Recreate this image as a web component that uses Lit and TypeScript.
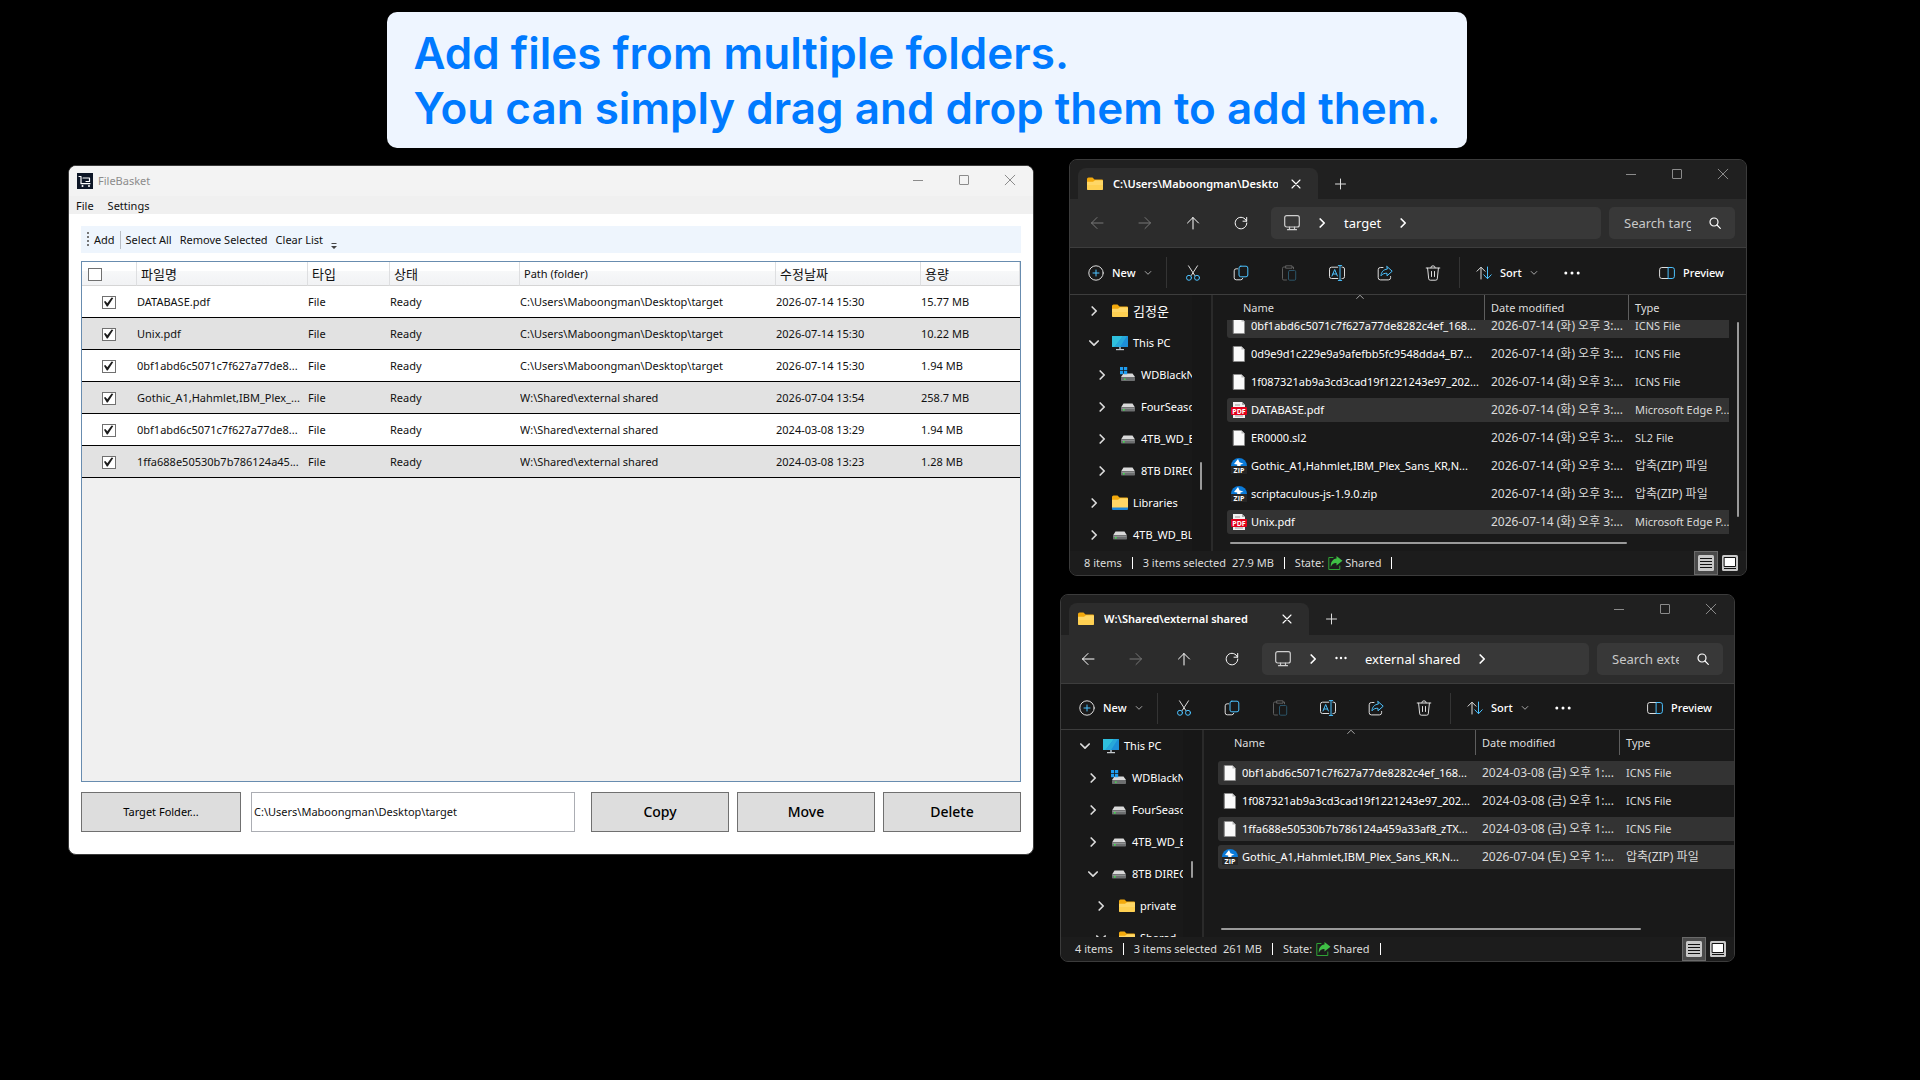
import { LitElement, html, css, svg, nothing, TemplateResult } from "lit";
import { customElement, property } from "lit/decorators.js";
import { classMap } from "lit/directives/class-map.js";

/* ---------- icons ---------- */

const draw = (size: number, body: unknown, cls = "") => html`
  <svg class="icon ${cls}" width=${size} height=${size} viewBox="0 0 ${size} ${size}"
    fill="none" stroke-linecap="round" stroke-linejoin="round" aria-hidden="true">${body}</svg>`;

const ACCENT = "#4cc2ff";
const LIGHT = "#dedede";

const icons: Record<string, () => TemplateResult> = {
  cart: () => draw(16, svg`
    <rect width="16" height="16" fill="#0d1626"/>
    <path d="M2 3.500h2v7.200h8.500M6 5h6.500v3.500H9M4 10.700h9" stroke="#fff" stroke-width="1.200"/>
    <circle cx="5.500" cy="13" r="1" fill="#fff"/><circle cx="12" cy="13" r="1" fill="#fff"/>`),
  minimize: () => draw(12, svg`<path d="M1 6.500h10" stroke="currentColor" stroke-linecap="butt"/>`),
  maximize: () => draw(12, svg`<rect x="1.500" y="1.500" width="9" height="9" rx="0.500" stroke="currentColor"/>`),
  close: () => draw(12, svg`<path d="M1.200 1.200l9.600 9.600M10.800 1.200l-9.600 9.600" stroke="currentColor"/>`),
  tabClose: () => draw(10, svg`<path d="M1 1l8 8M9 1L1 9" stroke="currentColor" stroke-width="1.100"/>`),
  plus: () => draw(12, svg`<path d="M6.500 1v10M1.500 6h10" stroke="currentColor"/>`),
  folder: () => draw(16, svg`
    <path d="M0 3a1.500 1.500 0 0 1 1.500-1.500h4L7.500 3.500H15a1 1 0 0 1 1 1V8H0z" fill="#f3a90c"/>
    <path d="M0 5.800h6l2-1.600h7.200a.8.8 0 0 1 .8.8v8a1 1 0 0 1-1 1H1a1 1 0 0 1-1-1z" fill="#ffd766"/>
    <path d="M0 9h16v4a1 1 0 0 1-1 1H1a1 1 0 0 1-1-1z" fill="#fdcb45" opacity=".6"/>`),
  library: () => draw(16, svg`
    <path d="M0 2a1.500 1.500 0 0 1 1.500-1.500h4L7.500 2.500H15a1 1 0 0 1 1 1V7H0z" fill="#f3a90c"/>
    <path d="M0 4.800h6l2-1.600h7.200a.8.8 0 0 1 .8.8v9H0z" fill="#ffd766"/>
    <path d="M0 12.500h16v1.500a1 1 0 0 1-1 1H1a1 1 0 0 1-1-1z" fill="#1c86d8"/>`),
  monitor: () => draw(16, svg`
    <path d="M0 1h16v11H0z" fill="#1d8fd8"/><path d="M0 1h11L2.500 12H0z" fill="#2fc0dd"/>
    <path d="M11 1L2.500 12H8L15 1z" fill="#27a8da"/>
    <path d="M7 12h2v2H7z" fill="#8d959c"/><path d="M4 14h8v1.200H4z" fill="#c3c8cc"/>`),
  drive: () => draw(16, svg`
    <path d="M3.500 4.500h9L15 8.500H1z" fill="#d9d9d9"/>
    <rect x="1" y="8.500" width="14" height="4" rx="0.800" fill="#6d6f70"/>
    <rect x="1.500" y="9" width="13" height="1" fill="#8f9192"/>
    <rect x="3" y="10" width="1.600" height="1.600" fill="#3fe04d"/>`),
  systemDrive: () => draw(16, svg`
    <path d="M3.500 6.500h9L15 10H1z" fill="#d9d9d9"/>
    <rect x="1" y="10" width="14" height="4" rx="0.800" fill="#6d6f70"/>
    <rect x="4" y="11.500" width="1.600" height="1.400" fill="#3fe04d"/>
    <path d="M0 0h3.200v3.200H0zM4 0h3.200v3.200H4zM0 4h3.200v3.200H0zM4 4h3.200v3.200H4z" fill="#1f9df0"/>`),
  file: () => draw(16, svg`
    <path d="M2.500.5h8l3 3v12h-11z" fill="#fafafa" stroke="#8d8d8d" stroke-width=".6"/>
    <path d="M10.500.5v3h3z" fill="#b8b8b8"/>`),
  pdf: () => html`<svg class="icon" width="16" height="16" viewBox="0 0 16 16" aria-hidden="true">
    <path d="M2 0h9l3 3v13H2z" fill="#f2f2f2"/><path d="M11 0v3h3z" fill="#a9a9a9"/>
    <path d="M4 3h5M4 14h8" stroke="#9a9a9a"/>
    <rect y="5" width="16" height="8" rx="1" fill="#e3001b"/>
    <text x="8" y="11.500" text-anchor="middle" font-family="Open Sans, sans-serif" font-weight="700" font-size="7" fill="#fff">PDF</text></svg>`,
  zip: () => html`<svg class="icon" width="16" height="16" viewBox="0 0 16 16" aria-hidden="true">
    <path d="M0 8a8 8 0 0 1 16 0z" fill="#0a7ad8"/>
    <path d="M7 1l1.500 3.200 4 1.600-3 .7V8H6.200V6.500L3 6z" fill="#fff"/>
    <rect y="8" width="16" height="8" fill="#262626"/>
    <text x="8" y="14.500" text-anchor="middle" font-family="Open Sans, sans-serif" font-weight="700" font-size="7" fill="#fff">ZIP</text></svg>`,
  back: () => draw(16, svg`<path d="M14 8H2.500M8 2.500L2.500 8 8 13.500" stroke="currentColor"/>`),
  forward: () => draw(16, svg`<path d="M2 8h11.500M8 2.500L13.500 8 8 13.500" stroke="currentColor"/>`),
  up: () => draw(16, svg`<path d="M8 14V2.500M2.500 8L8 2.500 13.500 8" stroke="currentColor"/>`),
  refresh: () => draw(16, svg`<path d="M13.500 6.200A5.800 5.800 0 1 0 13.800 8M13.700 2.500v3.700H10" stroke="currentColor"/>`),
  pc: () => draw(16, svg`
    <rect x="0.700" y="0.700" width="14.600" height="11.300" rx="2" stroke="#cfcfcf" stroke-width="1.200"/>
    <path d="M5.500 12v2.500M10.500 12v2.500M3.500 14.700h9" stroke="#cfcfcf" stroke-width="1.200"/>`),
  chevronRight: () => draw(10, svg`<path d="M3.200 1L7.200 5 3.200 9" stroke="currentColor" stroke-width="1.700"/>`),
  chevronDown: () => draw(10, svg`<path d="M.8 3L5 7.200 9.200 3" stroke="currentColor" stroke-width="1.700"/>`),
  caret: () => draw(8, svg`<path d="M1.200 2.500L4 5.300l2.800-2.800" stroke="#a8a8a8"/>`),
  sortMark: () => draw(8, svg`<path d="M.7 5.500L4 2.200l3.300 3.300" stroke="#a8a8a8"/>`),
  search: () => draw(12, svg`<circle cx="5" cy="5" r="4" stroke="currentColor" stroke-width="1.200"/><path d="M8 8l3.300 3.300" stroke="currentColor" stroke-width="1.200"/>`),
  add: () => draw(16, svg`<circle cx="8" cy="8" r="7.200" stroke=${LIGHT}/><path d="M8 5v6M5 8h6" stroke=${ACCENT}/>`),
  cut: () => draw(16, svg`
    <path d="M3.500.8l6.300 9.700M12.500.8L6.200 10.500" stroke=${LIGHT}/>
    <circle cx="4" cy="12.800" r="2.500" stroke=${ACCENT}/><circle cx="12" cy="12.800" r="2.500" stroke=${ACCENT}/>`),
  copy: () => draw(16, svg`
    <path d="M4.500 3.800H3.200A2 2 0 0 0 1.200 5.800v7a2 2 0 0 0 2 2h4.600a2 2 0 0 0 2-1.600" stroke=${LIGHT}/>
    <rect x="6" y="1.200" width="8.800" height="10.600" rx="1.800" stroke=${ACCENT}/>`),
  paste: () => draw(16, svg`
    <path d="M5 2H2.800A1.300 1.300 0 0 0 1.500 3.300v10.400a1.300 1.300 0 0 0 1.300 1.300H5.500M11 2h1.500v1.800M5 .8h6v2.400H5z" stroke="#5f5f5f"/>
    <rect x="7.500" y="5.500" width="7.200" height="9.700" rx="1.200" stroke="#2c5468"/>`),
  rename: () => draw(16, svg`
    <path d="M8.800 2.200H2.500A2 2 0 0 0 .5 4.200v7.300a2 2 0 0 0 2 2h6.300M13 2.200h.7a1.800 1.800 0 0 1 1.800 1.800v7.700a1.800 1.800 0 0 1-1.800 1.800H13" stroke=${LIGHT}/>
    <path d="M3 11l2.700-6.500L8.400 11M4 9h3.400M11 .7v14.600M9.300.6h3.400M9.300 15.400h3.400" stroke=${ACCENT}/>`),
  share: () => draw(16, svg`
    <path d="M6 2.500H3.400a2.200 2.200 0 0 0-2.200 2.200v8a2.200 2.200 0 0 0 2.200 2.200h8a2.200 2.200 0 0 0 2.200-2.200V11.500" stroke=${LIGHT}/>
    <path d="M10 1.500l5.200 4.700L10 10.800V8.300c-2.500-.2-4.500.5-6 2.500.2-3.500 2.200-6.300 6-6.700z" stroke=${ACCENT}/>`),
  trash: () => draw(16, svg`<path d="M1.200 3h13.600M5.800 2.800a2.200 2 0 0 1 4.400 0M2.600 3.200l1.100 10.600a1.600 1.600 0 0 0 1.600 1.400h5.400a1.600 1.600 0 0 0 1.600-1.400L13.400 3.200M6.500 6.500v5M9.500 6.500v5" stroke=${LIGHT}/>`),
  sort: () => draw(16, svg`<path d="M5 14V2.500M1 6.200l4-4 4 4" stroke=${LIGHT}/><path d="M11.500 2v11.500M7.800 9.800l3.700 3.900 3.700-3.900" stroke=${ACCENT}/>`),
  more: () => draw(16, svg`<circle cx="1.800" cy="8" r="1.500" fill="#fff"/><circle cx="8" cy="8" r="1.500" fill="#fff"/><circle cx="14.200" cy="8" r="1.500" fill="#fff"/>`),
  moreSmall: () => draw(12, svg`<circle cx="1.500" cy="5" r="1.200" fill="#fff"/><circle cx="6" cy="5" r="1.200" fill="#fff"/><circle cx="10.500" cy="5" r="1.200" fill="#fff"/>`),
  preview: () => draw(16, svg`
    <path d="M9.500 2.500H2.800a2.200 2.200 0 0 0-2.200 2.200v6.600a2.200 2.200 0 0 0 2.200 2.200h6.700" stroke=${LIGHT}/>
    <path d="M9.500 2.500h3.700a2.200 2.200 0 0 1 2.200 2.200v6.600a2.200 2.200 0 0 1-2.200 2.200H9.500z" stroke=${ACCENT}/>`),
  shared: () => draw(16, svg`
    <path d="M6 2.500H1.800v12h11V11" stroke="#2fa336"/>
    <path d="M9.500 1l6 4.800-6 4.800V8C6.500 7.800 5 9 3.800 12 3.500 7.500 5.500 4 9.500 3.600z" fill="#3fbf45"/>`),
  details: () => draw(16, svg`<rect width="16" height="16" rx="1.500" fill="#c8c8c8"/><path d="M2 3.500h12M2 6.500h12M2 9.500h12M2 12.500h12" stroke="#111" stroke-linecap="butt"/>`),
  tiles: () => draw(16, svg`<rect width="16" height="16" rx="1.500" fill="#c8c8c8"/><rect x="2.500" y="2.500" width="11" height="9" fill="#fff" stroke="#111"/><path d="M2 13.500h12" stroke="#111" stroke-linecap="butt"/>`),
};

const base = css`
  :host { display: block; box-sizing: border-box; font-family: "Noto Sans", "Noto Sans CJK KR", sans-serif; font-size: 11px; line-height: 16px; }
  *, *::before, *::after { box-sizing: border-box; }
  button, input { font: inherit; color: inherit; }
  button { background: none; border: 0; padding: 0; margin: 0; display: flex; align-items: center; justify-content: center; white-space: nowrap; }
  ul { list-style: none; margin: 0; padding: 0; }
  th, td { padding: 0; text-align: left; font-weight: 400; white-space: nowrap; overflow: hidden; }
  .icon { display: block; flex: none; }
  .controls { display: flex; margin-left: auto; align-self: flex-start; color: #8b8b8b; }
  .controls button { width: 46px; height: 28px; }
`;

const windowControls = () => html`
  <div class="controls">
    <button aria-label="Minimize">${icons.minimize()}</button>
    <button aria-label="Maximize">${icons.maximize()}</button>
    <button aria-label="Close">${icons.close()}</button>
  </div>`;

/* ---------- FileBasket window ---------- */

interface BasketRow { name: string; path: string; date: string; size: string; }

const DESKTOP = "C:\\Users\\Maboongman\\Desktop\\target";
const EXTERNAL = "W:\\Shared\\external shared";

@customElement("file-basket")
export class FileBasket extends LitElement {
  rows: BasketRow[] = [
    { name: "DATABASE.pdf", path: DESKTOP, date: "2026-07-14 15:30", size: "15.77 MB" },
    { name: "Unix.pdf", path: DESKTOP, date: "2026-07-14 15:30", size: "10.22 MB" },
    { name: "0bf1abd6c5071c7f627a77de8...", path: DESKTOP, date: "2026-07-14 15:30", size: "1.94 MB" },
    { name: "Gothic_A1,Hahmlet,IBM_Plex_...", path: EXTERNAL, date: "2026-07-04 13:54", size: "258.7 MB" },
    { name: "0bf1abd6c5071c7f627a77de8...", path: EXTERNAL, date: "2024-03-08 13:29", size: "1.94 MB" },
    { name: "1ffa688e50530b7b786124a45...", path: EXTERNAL, date: "2024-03-08 13:23", size: "1.28 MB" },
  ];

  static styles = [base, css`
    :host { background: #fff; color: #111; border: 1px solid #3a3a3a; border-radius: 8px; overflow: hidden; }
    .title { display: flex; align-items: center; height: 30px; padding-left: 8px; gap: 5px; background: #f3f3f3; color: #8c8c8c; }
    .menu { display: flex; height: 18px; padding: 2px 7px 0; gap: 14px; background: #f0f0f0; }
    .main { padding: 12px 12px 22px; display: flex; flex-direction: column; }
    .tools { display: flex; align-items: center; height: 27px; gap: 8px; padding-left: 6px; background: #eef5fd; margin-bottom: 8px; }
    .grip { width: 2px; height: 16px; margin-right: -3px; background: repeating-linear-gradient(#777 0 2px, transparent 2px 4px); }
    .rule { width: 1px; height: 18px; margin: 0 -3px; background: #b9bec5; }
    .overflow { width: 6px; height: 6px; align-self: flex-end; margin-bottom: 4px; }
    .grid { min-height: 521px; background: #f0f0f0; border: 1px solid #688caf; }
    table { width: 100%; table-layout: fixed; border-collapse: separate; border-spacing: 0; }
    .c-check { width: 55px; } .c-name { width: 171px; } .c-type { width: 82px; } .c-state { width: 130px; }
    .c-date { width: 145px; } .c-size { width: 99px; }
    th { height: 24px; padding: 1px 0 0 4px; border-right: 1px solid #dedfe1; border-bottom: 1px solid #d5d5d5; background: linear-gradient(#fff 0 40%, #f7f8f9 41%, #f1f2f4); }
    th:lang(ko) { font-size: 13px; }
    th:first-child { padding: 0 0 0 6px; }
    td { height: 32px; border-bottom: 1px solid #000; background: #fff; }
    tr:nth-child(even) td { background: #e2e2e2; }
    td.check { text-align: center; padding: 0 2px 1px 0; }
    .box { appearance: none; display: inline-block; vertical-align: middle; width: 14px; height: 13px; margin: 0; border: 1px solid #707070; background: #fff; }
    .box:checked::before { content: ""; display: block; width: 12px; height: 11px; background: #1c1c1c; clip-path: polygon(12% 48%, 24% 40%, 40% 60%, 76% 8%, 90% 14%, 44% 90%, 36% 90%); }
    .foot { display: flex; margin-top: 10px; height: 40px; gap: 8px; }
    .foot button { width: 138px; background: #ddd; border: 1px solid #707070; font-size: 14px; font-weight: 500; color: #000; }
    .foot .pick { width: 160px; font-size: 11px; font-weight: 400; }
    .path { flex: 1; min-width: 0; margin: 0 8px 0 2px; padding: 0 2px; border: 1px solid #abadb3; background: #fff; }
  `];

  render() {
    return html`
      <header class="title">${icons.cart()}<span>FileBasket</span>${windowControls()}</header>
      <nav class="menu"><button>File</button><button>Settings</button></nav>
      <div class="main">
        <div class="tools">
          <span class="grip"></span><button>Add</button><span class="rule"></span>
          <button>Select All</button><button>Remove Selected</button><button>Clear List</button>
          <svg class="overflow" viewBox="0 0 6 6" aria-hidden="true"><path d="M0.500 0h5v1h-5zM0 3h6L3 6z" fill="#444"/></svg>
        </div>
        <div class="grid">
          <table>
            <colgroup><col class="c-check"><col class="c-name"><col class="c-type"><col class="c-state"><col><col class="c-date"><col class="c-size"></colgroup>
            <thead><tr>
              <th><input class="box" type="checkbox" aria-label="Select all files"></th>
              <th lang="ko">파일명</th><th lang="ko">타입</th><th lang="ko">상태</th><th>Path (folder)</th>
              <th lang="ko">수정날짜</th><th lang="ko">용량</th>
            </tr></thead>
            <tbody>${this.rows.map(r => html`
              <tr>
                <td class="check"><input class="box" type="checkbox" checked aria-label=${r.name}></td>
                <td>${r.name}</td><td>File</td><td>Ready</td><td>${r.path}</td><td>${r.date}</td><td>${r.size}</td>
              </tr>`)}
            </tbody>
          </table>
        </div>
        <div class="foot">
          <button class="pick">Target Folder...</button>
          <input class="path" type="text" aria-label="Target folder" .value=${DESKTOP}>
          <button>Copy</button><button>Move</button><button>Delete</button>
        </div>
      </div>`;
  }
}

/* ---------- Explorer window ---------- */

interface TreeNode { label: string; icon: string; level: number; open?: boolean; lang?: string; }
interface Entry { name: string; icon: string; date: string; type: string; lang?: string; selected?: boolean; }
interface Folder {
  tab: string; crumb: string; nested: boolean; canGoBack: boolean; search: string;
  tree: TreeNode[]; entries: Entry[]; treeThumb: [number, number]; thumbWidth: number;
  scrolled: boolean; status: [string, string, string];
}

@customElement("explorer-window")
export class ExplorerWindow extends LitElement {
  @property({ attribute: false }) folder!: Folder;

  static styles = [base, css`
    :host { background: #191919; color: #fff; border: 1px solid #3b3b3b; border-radius: 8px; overflow: hidden; }
    .title { display: flex; height: var(--title-height, 39px); padding-left: 8px; background: #202020; }
    .tab { display: flex; align-items: center; width: 240px; margin-top: 8px; padding: 0 16px 0 9px; background: #2c2c2c; border-radius: 8px 8px 0 0; }
    .tab span { width: 165px; margin: 0 13px 0 10px; overflow: hidden; white-space: nowrap; font-weight: 600; }
    .new-tab { width: 44px; margin-top: 8px; color: #ddd; }
    .nav { display: flex; align-items: center; height: 49px; padding: 0 11px 0 3px; background: #2c2c2c; border-bottom: 1px solid #3d3d3d; }
    .nav > button { width: 48px; height: 32px; }
    .nav > button:disabled { color: #777; }
    .address { flex: 1; min-width: 0; display: flex; align-items: center; height: 32px; margin: 0 8px 0 6px; padding-left: 13px; background: #383838; border-radius: 5px; font-size: 13px; }
    .address .step { width: 44px; }
    .address .gap { margin-right: 18px; }
    .search { display: flex; align-items: center; width: 126px; height: 32px; padding-left: 15px; background: #383838; border-radius: 5px; font-size: 13px; }
    .search input { width: 67px; margin-right: 18px; padding: 0; border: 0; background: none; outline: 0; }
    .search input::placeholder { color: #c8c8c8; opacity: 1; }
    .bar { display: flex; align-items: center; height: var(--bar-height, 47px); padding: 3px 22px 0 18px; border-bottom: 1px solid #3d3d3d; font-weight: 500; }
    .bar button { width: 48px; height: 32px; gap: 8px; }
    .bar .new { width: 78px; justify-content: flex-start; }
    .bar .sort { width: 86px; padding-left: 14px; justify-content: flex-start; }
    .bar .preview { width: auto; margin-left: auto; }
    .bar .rule { width: 1px; height: 31px; margin-right: 2px; background: #343434; }
    .bar .trash { margin-right: 2px; }
    .body { display: flex; height: var(--body-height, 256px); }
    .tree { width: 122px; overflow: hidden; }
    .tree button { height: 32px; color: #fff; }
    .tree .twist { width: 16px; margin-right: 10px; display: flex; justify-content: center; color: #dcdcdc; }
    .tree .label { margin-left: 5px; }
    .tree .label:lang(ko) { font-size: 13px; }
    .level-0 { padding-left: 16px; } .level-1 { padding-left: 24px; } .level-2 { padding-left: 32px; }
    .rail { width: 19px; padding-left: 8px; background: #171717; }
    .thumb { display: block; background: #9a9a9a; border-radius: 1px; }
    .rail .thumb, .side .thumb { width: 2px; }
    .pane { flex: 1; min-width: 0; display: flex; flex-direction: column; border-left: 2px solid #2a2a2a; }
    .split { display: flex; min-width: 0; }
    table { flex: 1; min-width: 0; display: block; }
    thead { display: block; }
    tr { display: grid; grid-template-columns: 257px 144px minmax(0, 1fr); margin-left: 14px; }
    thead tr { height: 25px; color: #dedede; }
    th { line-height: 26px; padding-left: 6px; border-left: 1px solid #5e5e5e; }
    th:first-child { position: relative; padding-left: 16px; border: 0; }
    .mark { position: absolute; left: 129px; top: -2px; }
    tbody { display: flex; flex-direction: column; justify-content: flex-end; padding-top: 4px; }
    .scrolled tbody { height: 216px; padding: 0; overflow: hidden; }
    tbody tr { flex: none; height: 24px; margin-top: 2px; margin-bottom: 2px; align-items: center; border-radius: 3px 0 0 3px; color: #dadada; }
    tbody tr.selected { background: #333; }
    td { padding-left: 7px; line-height: 24px; }
    td:lang(ko) { font-size: 12px; }
    td:first-child { display: flex; align-items: center; gap: 4px; padding-left: 4px; color: #fff; }
    .side { width: 17px; margin-left: auto; padding: 27px 0 0 8px; }
    .side .thumb { height: 195px; }
    .bottom { height: 2px; margin: auto 0 7px 17px; }
    .status { display: flex; align-items: center; height: 24px; padding: 0 8px 0 14px; color: #dcdcdc; background: #1c1c1c; white-space: nowrap; }
    .status .rule { width: 1px; height: 12px; margin: 0 10px; background: #fff; }
    .status .extra { margin-left: 6px; }
    .status .share { margin: 0 2px 0 3px; }
    .status .view { width: 24px; height: 24px; margin: 0 4px 0 auto; background: #4a4a4a; border: 1px solid #6a6a6a; }
  `];

  private item(n: TreeNode) {
    return html`<li><button class="level-${n.level}">
      <span class="twist">${n.open ? icons.chevronDown() : icons.chevronRight()}</span>
      ${icons[n.icon]()}<span class="label" lang=${n.lang ?? "en"}>${n.label}</span></button></li>`;
  }

  render() {
    const f = this.folder;
    return html`
      <header class="title">
        <div class="tab">${icons.folder()}<span>${f.tab}</span><button aria-label="Close tab">${icons.tabClose()}</button></div>
        <button class="new-tab" aria-label="New tab">${icons.plus()}</button>
        ${windowControls()}
      </header>
      <nav class="nav">
        <button aria-label="Back" ?disabled=${!f.canGoBack}>${icons.back()}</button>
        <button aria-label="Forward" disabled>${icons.forward()}</button>
        <button aria-label="Up">${icons.up()}</button>
        <button aria-label="Refresh">${icons.refresh()}</button>
        <div class="address">
          ${icons.pc()}<button class="step" aria-label="Locations">${icons.chevronRight()}</button>
          ${f.nested ? html`<button class="gap" aria-label="Hidden folders">${icons.moreSmall()}</button>` : nothing}
          <button>${f.crumb}</button><button class="step" aria-label="Subfolders">${icons.chevronRight()}</button>
        </div>
        <div class="search"><input type="text" aria-label=${f.search} placeholder=${f.search}><button aria-label="Search">${icons.search()}</button></div>
      </nav>
      <div class="bar">
        <button class="new">${icons.add()}<span>New</span>${icons.caret()}</button><span class="rule"></span>
        <button aria-label="Cut">${icons.cut()}</button>
        <button aria-label="Copy">${icons.copy()}</button>
        <button aria-label="Paste" disabled>${icons.paste()}</button>
        <button aria-label="Rename">${icons.rename()}</button>
        <button aria-label="Share">${icons.share()}</button>
        <button class="trash" aria-label="Delete">${icons.trash()}</button><span class="rule"></span>
        <button class="sort">${icons.sort()}<span>Sort</span>${icons.caret()}</button>
        <button aria-label="More">${icons.more()}</button>
        <button class="preview">${icons.preview()}<span>Preview</span></button>
      </div>
      <div class="body">
        <ul class="tree">${f.tree.map(n => this.item(n))}</ul>
        <div class="rail" style="padding-top:${f.treeThumb[0]}px"><span class="thumb" style="height:${f.treeThumb[1]}px"></span></div>
        <div class="pane">
          <div class="split ${classMap({ scrolled: f.scrolled })}">
            <table>
              <thead><tr><th>Name<span class="mark">${icons.sortMark()}</span></th><th>Date modified</th><th>Type</th></tr></thead>
              <tbody>${f.entries.map(e => html`
                <tr class=${classMap({ selected: !!e.selected })}>
                  <td>${icons[e.icon]()}<span>${e.name}</span></td><td lang="ko">${e.date}</td><td lang=${e.lang ?? "en"}>${e.type}</td>
                </tr>`)}
              </tbody>
            </table>
            ${f.scrolled ? html`<div class="side"><span class="thumb"></span></div>` : nothing}
          </div>
          <span class="thumb bottom" style="width:${f.thumbWidth}px"></span>
        </div>
      </div>
      <footer class="status">
        <span>${f.status[0]}</span><span class="rule"></span>
        <span>${f.status[1]}</span><span class="extra">${f.status[2]}</span><span class="rule"></span>
        <span>State:</span><span class="share">${icons.shared()}</span><span>Shared</span><span class="rule"></span>
        <button class="view" aria-label="Details view">${icons.details()}</button>
        <button aria-label="Thumbnail view">${icons.tiles()}</button>
      </footer>`;
  }
}

/* ---------- page ---------- */

const JULY = "2026-07-14 (화) 오후 3:...";
const MARCH = "2024-03-08 (금) 오후 1:...";

const drives: TreeNode[] = [
  { label: "WDBlackNVMe", icon: "systemDrive", level: 1 },
  { label: "FourSeasons", icon: "drive", level: 1 },
  { label: "4TB_WD_BLUE", icon: "drive", level: 1 },
];

const targetFolder: Folder = {
  tab: "C:\\Users\\Maboongman\\Desktop", crumb: "target", nested: false, canGoBack: false, search: "Search target",
  tree: [
    { label: "김정운", icon: "folder", level: 0, lang: "ko" },
    { label: "This PC", icon: "monitor", level: 0, open: true },
    ...drives,
    { label: "8TB DIRECT", icon: "drive", level: 1 },
    { label: "Libraries", icon: "library", level: 0 },
    { label: "4TB_WD_BLUE", icon: "drive", level: 0 },
  ],
  entries: [
    { name: "0bf1abd6c5071c7f627a77de8282c4ef_168...", icon: "file", date: JULY, type: "ICNS File", selected: true },
    { name: "0d9e9d1c229e9a9afefbb5fc9548dda4_B7...", icon: "file", date: JULY, type: "ICNS File" },
    { name: "1f087321ab9a3cd3cad19f1221243e97_202...", icon: "file", date: JULY, type: "ICNS File" },
    { name: "DATABASE.pdf", icon: "pdf", date: JULY, type: "Microsoft Edge P...", selected: true },
    { name: "ER0000.sl2", icon: "file", date: JULY, type: "SL2 File" },
    { name: "Gothic_A1,Hahmlet,IBM_Plex_Sans_KR,N...", icon: "zip", date: JULY, type: "압축(ZIP) 파일", lang: "ko" },
    { name: "scriptaculous-js-1.9.0.zip", icon: "zip", date: JULY, type: "압축(ZIP) 파일", lang: "ko" },
    { name: "Unix.pdf", icon: "pdf", date: JULY, type: "Microsoft Edge P...", selected: true },
  ],
  treeThumb: [167, 28], thumbWidth: 397, scrolled: true,
  status: ["8 items", "3 items selected", "27.9 MB"],
};

const sharedFolder: Folder = {
  tab: EXTERNAL, crumb: "external shared", nested: true, canGoBack: true, search: "Search external shared",
  tree: [
    { label: "This PC", icon: "monitor", level: 0, open: true },
    ...drives,
    { label: "8TB DIRECT", icon: "drive", level: 1, open: true },
    { label: "private", icon: "folder", level: 2 },
    { label: "Shared", icon: "folder", level: 2, open: true },
  ],
  entries: [
    { name: "0bf1abd6c5071c7f627a77de8282c4ef_168...", icon: "file", date: MARCH, type: "ICNS File", selected: true },
    { name: "1f087321ab9a3cd3cad19f1221243e97_202...", icon: "file", date: MARCH, type: "ICNS File" },
    { name: "1ffa688e50530b7b786124a459a33af8_zTX...", icon: "file", date: MARCH, type: "ICNS File", selected: true },
    { name: "Gothic_A1,Hahmlet,IBM_Plex_Sans_KR,N...", icon: "zip", date: "2026-07-04 (토) 오후 1:...", type: "압축(ZIP) 파일", lang: "ko", selected: true },
  ],
  treeThumb: [131, 17], thumbWidth: 420, scrolled: false,
  status: ["4 items", "3 items selected", "261 MB"],
};

@customElement("app-root")
export class AppRoot extends LitElement {
  static styles = css`
    :host { display: block; box-sizing: border-box; min-height: 100vh; background: #000; overflow: hidden; }
    .hero { display: flex; justify-content: center; padding: 12px 66px 0 0; }
    h1 { margin: 0; padding: 14px 27px 12px; background: #eef5ff; border-radius: 10px; color: #007aff; font: 600 44px/55px Inter, sans-serif; }
    .desk { display: grid; grid-template-columns: minmax(0, 966fr) minmax(0, 687fr); column-gap: 26px; align-items: start; padding: 11px 173px 40px 68px; }
    file-basket { margin-top: 6px; }
    .right { display: flex; flex-direction: column; gap: 18px; }
    .front { margin-left: 9px; }
    .back { margin-right: 12px; --title-height: 40px; --bar-height: 46px; --body-height: 207px; }
  `;

  render() {
    return html`
      <div class="hero"><h1>Add files from multiple folders.<br>You can simply drag and drop them to add them.</h1></div>
      <main class="desk">
        <file-basket></file-basket>
        <div class="right">
          <explorer-window class="front" .folder=${targetFolder}></explorer-window>
          <explorer-window class="back" .folder=${sharedFolder}></explorer-window>
        </div>
      </main>`;
  }
}
